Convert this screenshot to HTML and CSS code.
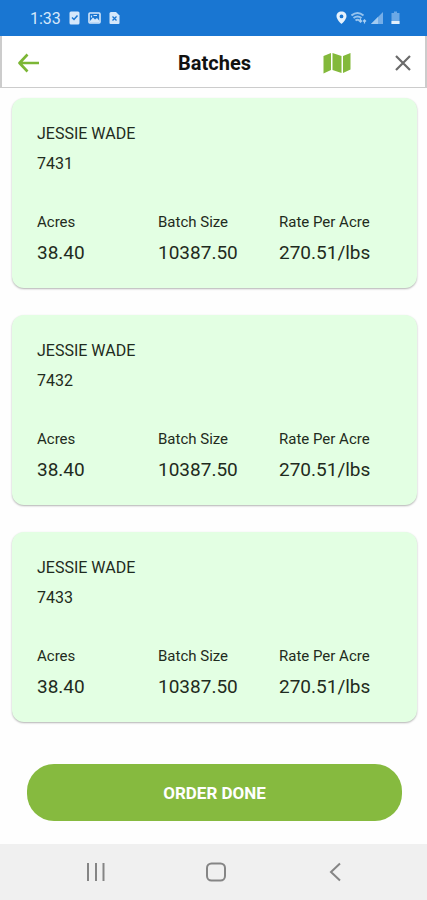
FILE: index.html
```html
<!DOCTYPE html>
<html lang="en">
<head>
    <meta charset="UTF-8">
    <meta name="viewport" content="width=device-width, initial-scale=1.0">
    <title>Batches</title>
    <link rel="stylesheet" href="styles.css">
</head>
<body>
    <div class="status-bar">
        <div class="status-left">
            <span class="time">1:33</span>
            <svg width="11" height="14" viewBox="0 0 11 14">
                <rect x="0.5" y="0.5" width="10" height="13" rx="1.5" fill="#d5e8fb"/>
                <path d="M3 6.5L5 8.5L8.5 4.5" stroke="#1976d2" stroke-width="1.5" fill="none"/>
            </svg>
            <svg width="13" height="14" viewBox="0 0 13 14">
                <rect x="1" y="2" width="11" height="10" rx="1" stroke="#d5e8fb" stroke-width="1.6" fill="none"/>
                <path d="M2 10L5 6.5L7 8.5L9 7L11.5 10V11.5H2Z" fill="#d5e8fb"/>
                <path d="M3.5 4.5V6.5M5.5 4.5H9" stroke="#d5e8fb" stroke-width="1.2"/>
            </svg>
            <svg width="11" height="14" viewBox="0 0 11 14">
                <path d="M2 1H7L10.5 4.5V12Q10.5 13 9.5 13H1.5Q0.5 13 0.5 12V2.5Q0.5 1 2 1Z" fill="#d5e8fb"/>
                <path d="M3.5 5.5L7.5 9.5M7.5 5.5L3.5 9.5" stroke="#1976d2" stroke-width="1.3"/>
            </svg>
        </div>
        <div class="status-right">
            <svg width="11" height="14" viewBox="0 0 11 14">
                <path fill-rule="evenodd" d="M5.5 0.5C2.5 0.500 0.500 2.500 0.500 5.200C0.500 8.500 5.500 13 5.500 13S10.500 8.500 10.500 5.200C10.500 2.500 8.500 0.500 5.500 0.500ZM5.500 3.500A1.900 1.900 0 1 1 5.500 7.300A1.900 1.900 0 1 1 5.500 3.500Z" fill="#e6f2fd"/>
            </svg>
            <svg width="16" height="14" viewBox="0 0 16 14">
                <path d="M0.5 4.5Q6.5 -0.5 12.5 4.5M2.5 7Q6.500 4 10.500 7M4.500 9.500Q6.500 8 8.500 9.500" stroke="#94c2ee" stroke-width="2" fill="none"/>
                <path d="M9.500 7.500V11M8 9.500L9.500 11.200L11 9.500M13.500 12.500V9M12 10.500L13.500 8.800L15 10.500" stroke="#a9cff3" stroke-width="1.200" fill="none"/>
            </svg>
            <svg width="12" height="14" viewBox="0 0 12 14">
                <path d="M0 13L12 1V13Z" fill="#75aee8"/>
                <path d="M0 13L7 6V13Z" fill="#a3cbf1"/>
            </svg>
            <svg class="battery" width="9" height="14" viewBox="0 0 9 14">
                <path d="M3 0.500H6V2H8.500V13H0.500V2H3Z" fill="#6ba8e6"/>
                <path d="M0.500 10H8.500V13H0.500Z" fill="#e1effc"/>
            </svg>
        </div>
    </div>

    <header class="header">
        <button class="icon-btn" aria-label="Back">
            <svg width="22" height="20" viewBox="0 0 22 20">
                <path d="M9.500 1.500L1.500 10L9.500 18.500M1.500 10H21" stroke="#7cb635" stroke-width="2.600" fill="none" stroke-linejoin="round"/>
            </svg>
        </button>
        <h1 class="title">Batches</h1>
        <div class="header-actions">
            <button class="icon-btn" aria-label="Map">
                <svg width="28" height="22" viewBox="0 0 28 22">
                    <path d="M0.500 4L8 1V18L0.500 21.500ZM9.500 1L18.500 4V21L9.500 18ZM20 4L27.500 1V17.500L20 21Z" fill="#83b93b"/>
                </svg>
            </button>
            <button class="icon-btn" aria-label="Close">
                <svg width="16" height="16" viewBox="0 0 16 16">
                    <path d="M1 1L15 15M15 1L1 15" stroke="#6b6b6b" stroke-width="2.200"/>
                </svg>
            </button>
        </div>
    </header>

    <main class="content">
        <section class="card">
            <h2 class="name">JESSIE WADE</h2>
            <p class="number">7431</p>
            <dl class="stats">
                <div>
                    <dt>Acres</dt>
                    <dd>38.40</dd>
                </div>
                <div>
                    <dt>Batch Size</dt>
                    <dd>10387.50</dd>
                </div>
                <div>
                    <dt>Rate Per Acre</dt>
                    <dd>270.51/lbs</dd>
                </div>
            </dl>
        </section>

        <section class="card">
            <h2 class="name">JESSIE WADE</h2>
            <p class="number">7432</p>
            <dl class="stats">
                <div>
                    <dt>Acres</dt>
                    <dd>38.40</dd>
                </div>
                <div>
                    <dt>Batch Size</dt>
                    <dd>10387.50</dd>
                </div>
                <div>
                    <dt>Rate Per Acre</dt>
                    <dd>270.51/lbs</dd>
                </div>
            </dl>
        </section>

        <section class="card">
            <h2 class="name">JESSIE WADE</h2>
            <p class="number">7433</p>
            <dl class="stats">
                <div>
                    <dt>Acres</dt>
                    <dd>38.40</dd>
                </div>
                <div>
                    <dt>Batch Size</dt>
                    <dd>10387.50</dd>
                </div>
                <div>
                    <dt>Rate Per Acre</dt>
                    <dd>270.51/lbs</dd>
                </div>
            </dl>
        </section>
    </main>

    <div class="footer">
        <button class="btn-done">ORDER DONE</button>
    </div>

    <nav class="nav-bar">
        <button class="icon-btn" aria-label="Recent apps">
            <svg width="20" height="20" viewBox="0 0 20 20">
                <path d="M2 1V19M10 1V19M17.500 1V19" stroke="#858585" stroke-width="2"/>
            </svg>
        </button>
        <button class="icon-btn" aria-label="Home">
            <svg width="20" height="20" viewBox="0 0 20 20">
                <rect x="1" y="1.500" width="18" height="17" rx="4.500" stroke="#858585" stroke-width="2" fill="none"/>
            </svg>
        </button>
        <button class="icon-btn" aria-label="Back">
            <svg width="20" height="20" viewBox="0 0 20 20">
                <path d="M15 1.500L6 10L15 18.500" stroke="#858585" stroke-width="2" fill="none"/>
            </svg>
        </button>
    </nav>
</body>
</html>
```

FILE: styles.css
```css
* {
    box-sizing: border-box;
}

body {
    font-family: Roboto, sans-serif;
    margin: 0;
    background: #fefefe;
    color: #1f2b20;
    min-height: 100vh;
    display: flex;
    flex-direction: column;
}

h1, h2, p, dl, dd {
    margin: 0;
}

svg {
    display: block;
}

.status-bar {
    height: 36px;
    padding: 0 27px 0 30px;
    background: #1976d2;
    color: #d5e8fb;
    display: flex;
    align-items: center;
    justify-content: space-between;
}

.status-left {
    display: flex;
    align-items: center;
    gap: 8px;
}

.status-right {
    display: flex;
    align-items: center;
    gap: 4px;
}

.battery {
    margin-left: 4px;
}

.time {
    font-size: 16px;
}

.header {
    height: 52px;
    padding: 3px 14px 0 16px;
    border: 2px solid #cccccc;
    border-top: none;
    border-bottom-width: 1px;
    background: #ffffff;
    display: grid;
    grid-template-columns: 1fr auto 1fr;
    align-items: center;
}

.title {
    font-size: 20px;
    font-weight: 700;
    color: #111111;
}

.header-actions {
    display: flex;
    align-items: center;
    justify-content: flex-end;
    gap: 44px;
}

.icon-btn {
    padding: 0;
    border: none;
    background: none;
    cursor: pointer;
    justify-self: start;
}

.content {
    padding: 10px 10px 0 12px;
    display: flex;
    flex-direction: column;
    gap: 27px;
}

.card {
    padding: 21px 17px 20px 25px;
    background: #e3ffe3;
    border-radius: 12px;
    box-shadow: 0 1px 2px rgba(0, 0, 0, 0.3);
}

.name,
.number {
    font-size: 16px;
    font-weight: 400;
    line-height: 30px;
}

.stats {
    margin-top: 28px;
    display: grid;
    grid-template-columns: repeat(3, 1fr);
}

.stats dt {
    font-size: 15px;
    line-height: 30px;
}

.stats dd {
    font-size: 19px;
    line-height: 31px;
}

.footer {
    padding: 42px 25px 23px 27px;
}

.btn-done {
    display: block;
    width: 100%;
    height: 57px;
    border: none;
    border-radius: 27px;
    background: #86ba3f;
    color: #ffffff;
    font-family: inherit;
    font-size: 17px;
    font-weight: 700;
    cursor: pointer;
}

.nav-bar {
    height: 56px;
    margin-top: auto;
    padding: 0 82px 0 86px;
    background: #f0f0f0;
    display: flex;
    align-items: center;
    justify-content: space-between;
}
```
